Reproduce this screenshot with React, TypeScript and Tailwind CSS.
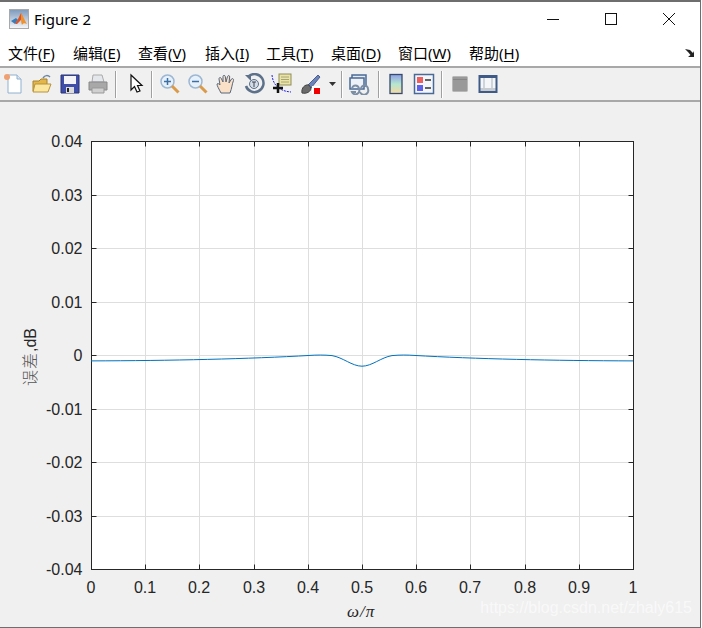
const menus = [
  ['文件', 'F', 'w-[65px]'],
  ['编辑', 'E', 'w-[65px]'],
  ['查看', 'V', 'w-[67px]'],
  ['插入', 'I', 'w-[61px]'],
  ['工具', 'T', 'w-[65px]'],
  ['桌面', 'D', 'w-[67px]'],
  ['窗口', 'W', 'w-[71px]'],
  ['帮助', 'H', 'w-[60px]'],
];

const xTicks = [0, 0.1, 0.2, 0.3, 0.4, 0.5, 0.6, 0.7, 0.8, 0.9, 1];
const yTicks = ['0.04', '0.03', '0.02', '0.01', '0', '-0.01', '-0.02', '-0.03', '-0.04'];

// plot box inside the chart svg (which starts at y=102)
const L = 91.5;
const R = 633.5;
const T = 39.5;
const B = 467.5;

function Icon({ children, className = 'w-[28px]' }: { children: React.ReactNode; className?: string }) {
  return (
    <div className={`flex h-[24px] shrink-0 items-center justify-center ${className}`}>
      <svg width="22" height="22" viewBox="0 0 22 22">
        {children}
      </svg>
    </div>
  );
}

function Sep({ className }: { className: string }) {
  return <div className={`h-[27px] w-[2px] shrink-0 border-l border-[#a0a0a0] bg-white ${className}`} />;
}

function MatlabLogo() {
  return (
    <div className="mr-[5px] flex h-[20px] w-[20px] items-center justify-center border border-[#a9a9a9] bg-gradient-to-b from-[#7f9cbd] to-[#f4f6f8]">
      <svg width="16" height="14" viewBox="0 0 16 14">
        <path d="M0 9 L5 6 L7 8 L4 12 Z" fill="#3a7cb8" />
        <path d="M4 12 L7 7 L10 1 L12 5 L9 9 L6 12 Z" fill="#d9552b" />
        <path d="M10 1 C12 4 14 9 16 12 C14 11 12 11 11 13 C10 10 10 7 10 1 Z" fill="#f0912c" />
      </svg>
    </div>
  );
}

export default function App() {
  return (
    <div className="relative h-[628px] w-[702px] overflow-hidden bg-white [font-family:'Noto_Sans','Noto_Sans_CJK_SC',sans-serif]">
      <div className="flex h-[628px] w-[701px] flex-col border-t-2 border-r border-b border-[#6e6e6e]">
        {/* Title bar */}
        <header className="flex h-[38px] items-start pt-[7px] pl-[9px] pr-[24px]">
          <MatlabLogo />
          <span className="text-[15px] leading-[20px] text-black">Figure 2</span>
          <div className="ml-auto flex h-[20px] items-center">
            <svg width="14" height="14" viewBox="0 0 14 14" className="mr-[44px]">
              <path d="M1 7.5H13" stroke="#111" />
            </svg>
            <svg width="14" height="14" viewBox="0 0 14 14" className="mr-[44px]">
              <rect x="1.5" y="1.5" width="11" height="11" fill="none" stroke="#111" />
            </svg>
            <svg width="14" height="14" viewBox="0 0 14 14">
              <path d="M1 1L13 13M13 1L1 13" stroke="#111" />
            </svg>
          </div>
        </header>

        {/* Menu */}
        <nav className="flex h-[28px] items-center border-b-2 border-[#a8a8a8] pl-[8px] pr-[4px] text-[15px] leading-none text-black">
          {menus.map(([name, key, w]) => (
            <span key={name} className={`${w} whitespace-nowrap`}>
              {name}(<span className="underline underline-offset-2">{key}</span>)
            </span>
          ))}
          <svg width="12" height="10" viewBox="0 0 12 10" className="ml-auto">
            <path d="M1 1L6 2L9 5L10 3V9H4L6.5 7L4 4Z" fill="#222" />
          </svg>
        </nav>

        {/* Toolbar */}
        <div className="flex h-[34px] items-center border-b-2 border-[#a8a8a8] bg-[#f0f0f0]">
          <Icon>
            <path d="M5 2H14L18 6V20H5Z" fill="#fff" stroke="#8fb0d0" />
            <path d="M14 2V6H18" fill="#dbe7f3" stroke="#8fb0d0" />
            <circle cx="4" cy="4" r="3" fill="#f0a070" />
          </Icon>
          <Icon>
            <path d="M2 8H8L10 6H16V18H2Z" fill="#e3b64a" stroke="#a8822c" />
            <path d="M4 11H20L17 19H2Z" fill="#fbe7a0" stroke="#b8923a" />
            <path d="M12 5C14 2 17 2 19 4" fill="none" stroke="#6d86a3" strokeWidth="1.5" />
          </Icon>
          <Icon>
            <path d="M2 2H20V20H2Z" fill="#3f4ea8" stroke="#2a3576" />
            <rect x="5" y="3" width="12" height="8" fill="#f4f4f8" />
            <rect x="7" y="14" width="8" height="6" fill="#dcdcdc" />
            <rect x="8" y="15" width="2" height="4" fill="#222" />
          </Icon>
          <Icon>
            <path d="M6 2H15L17 9H5Z" fill="#e4e8ec" stroke="#aaa" />
            <path d="M2 9H20V17H2Z" fill="#a8a8a8" stroke="#888" />
            <path d="M5 15H17V20H5Z" fill="#d0d0d0" stroke="#999" />
          </Icon>
          <Sep className="ml-[3px]" />
          <Icon className="ml-[5px] w-[28px]">
            <path d="M6 2V17L9.5 13.5L12 19L15 18L12.5 12.5H17Z" fill="#fff" stroke="#111" strokeWidth="1.2" />
          </Icon>
          <Sep className="ml-[1px]" />
          <Icon className="ml-[3px] w-[28px]">
            <circle cx="8.5" cy="8.5" r="6.5" fill="#e6f0fa" stroke="#9db7d3" strokeWidth="1.5" />
            <path d="M5 8.5H12M8.5 5V12" stroke="#3c6fa6" strokeWidth="1.5" />
            <path d="M13 13L19.5 19.5" stroke="#d99a4a" strokeWidth="3" />
          </Icon>
          <Icon>
            <circle cx="8.5" cy="8.5" r="6.5" fill="#e6f0fa" stroke="#9db7d3" strokeWidth="1.5" />
            <path d="M5 8.5H12" stroke="#3c6fa6" strokeWidth="1.5" />
            <path d="M13 13L19.5 19.5" stroke="#d99a4a" strokeWidth="3" />
          </Icon>
          <Icon>
            <path
              d="M6 20C4 16 2 13 2 11C3 10 4 11 5 12L4 6C4 4 6 4 6.5 6L8 9L8 3.5C8 2 10 2 10.3 3.5L11 9L12.5 3.5C13 2 15 2.5 14.7 4L14 10L16.5 6C17.5 5 19 6 18.5 7.5C17 11 17 15 15 20Z"
              fill="#fbe0c8"
              stroke="#57677a"
            />
          </Icon>
          <Icon>
            <path d="M6 3A9 9 0 1 1 3 13" fill="none" stroke="#5c7089" strokeWidth="2.5" />
            <path d="M2 2H8V8Z" fill="#5c7089" />
            <circle cx="11" cy="11" r="4.5" fill="#d3dde8" stroke="#5c7089" />
            <path d="M9 9H13M11 9V14" stroke="#445" />
          </Icon>
          <Icon>
            <path d="M1 2C2 12 8 18 20 19" fill="none" stroke="#2222dd" strokeDasharray="2 1" />
            <rect x="8" y="1" width="12" height="11" fill="#e9e3a5" stroke="#8f8c5a" />
            <path d="M10 4H18M10 6.5H18M10 9H18" stroke="#a8a47a" />
            <path d="M7 10V20M2 15H12" stroke="#111" strokeWidth="2.5" />
          </Icon>
          <Icon className="ml-[1px] w-[28px]">
            <path d="M8 12L18 2L20 4L11 15Z" fill="#6b83b8" stroke="#4a5f8f" />
            <path d="M2 20C1 15 5 11 9 12L11 15C11 19 6 21 2 20Z" fill="#6b6b6b" stroke="#444" />
            <rect x="12" y="13" width="8" height="8" fill="#fff" />
            <rect x="14" y="15" width="6" height="6" fill="#f00000" />
          </Icon>
          <svg width="7" height="4" viewBox="0 0 7 4" className="ml-[4px] shrink-0">
            <path d="M0 0H7L3.5 4Z" fill="#333" />
          </svg>
          <Sep className="ml-[5px]" />
          <Icon className="ml-[3px] w-[28px]">
            <rect x="3" y="2" width="14" height="11" fill="#e3ebf5" stroke="#4a6a96" strokeWidth="1.5" />
            <rect x="1" y="5" width="14" height="11" fill="#eef2f8" stroke="#4a6a96" strokeWidth="1.5" />
            <path d="M3 16A3 3 0 0 1 10 16A3 3 0 0 1 3 19H7M11 19A3 3 0 0 0 19 16A3 3 0 0 0 12 16" fill="none" stroke="#7c8ea5" strokeWidth="2" />
          </Icon>
          <Sep className="ml-[4px]" />
          <Icon className="ml-[2px] w-[28px]">
            <defs>
              <linearGradient id="cb" x1="0" y1="0" x2="0" y2="1">
                <stop offset="0" stopColor="#8f9fe8" />
                <stop offset="0.5" stopColor="#b4e6d0" />
                <stop offset="1" stopColor="#f8d8a0" />
              </linearGradient>
            </defs>
            <rect x="5" y="1.5" width="12" height="19" fill="url(#cb)" stroke="#34496e" strokeWidth="1.3" />
          </Icon>
          <Icon>
            <rect x="1.5" y="1.5" width="19" height="19" fill="#f4f6fa" stroke="#4a6a96" strokeWidth="1.5" />
            <rect x="4" y="4" width="6" height="6" fill="#ee5f5f" />
            <rect x="4" y="12" width="6" height="6" fill="#5f62e8" />
            <path d="M12 7H18M12 15H18" stroke="#333" strokeWidth="1.5" />
          </Icon>
          <Sep className="ml-[3px]" />
          <Icon className="ml-[3px] w-[28px]">
            <rect x="3.5" y="3.5" width="15" height="15" rx="1" fill="#999" stroke="#b8b8b8" />
            <path d="M4 6.5H18" stroke="#858585" />
          </Icon>
          <Icon>
            <rect x="1.5" y="2" width="19" height="18" fill="#3f5a86" />
            <rect x="3.5" y="5" width="15" height="10" fill="#f4f6f8" />
            <rect x="3.5" y="15" width="15" height="3" fill="#c8ccd0" />
            <path d="M7 5V15M15 5V15" stroke="#a9b3c2" />
          </Icon>
        </div>

        {/* Plot area */}
        <main className="relative flex-1 bg-[#f0f0f0]">
          <svg width="700" height="525" viewBox="0 0 700 525" className="block font-['Liberation_Sans',sans-serif]">
            <rect x={L} y={T} width={R - L} height={B - T} fill="#fff" />
            {xTicks.map((t) => {
              const x = Math.floor(L + (R - L) * t) + 0.5;
              return (
                <g key={t}>
                  <path d={`M${x} ${T}V${B}`} stroke="#dedede" />
                  <path d={`M${x} ${B}v-5M${x} ${T}v5`} stroke="#262626" />
                  <text x={x - 0.5} y={B + 23} textAnchor="middle" fontSize="16" fill="#262626">
                    {t}
                  </text>
                </g>
              );
            })}
            {yTicks.map((t, i) => {
              const y = Math.floor(T + ((B - T) * i) / 8) + 0.5;
              return (
                <g key={t}>
                  <path d={`M${L} ${y}H${R}`} stroke="#dedede" />
                  <path d={`M${L} ${y}h5M${R} ${y}h-5`} stroke="#262626" />
                  <text x={L - 9} y={y + 5} textAnchor="end" fontSize="16" fill="#262626">
                    {t}
                  </text>
                </g>
              );
            })}
            <rect x={L} y={T} width={R - L} height={B - T} fill="none" stroke="#262626" />
            <path
              transform="translate(0 -101.6)"
              d="M91 360.5C170 360.3 250 358.5 310 355C316 354.6 324 354.4 332 355.2C343 357 352 365.8 362 365.8C372 365.8 381 357 392 355.2C400 354.4 408 354.6 414 355C474 358.5 554 360.3 633 360.5"
              fill="none"
              stroke="#0072bd"
              strokeWidth="1"
            />
            <text transform="translate(36 284) rotate(-90)" fontSize="16" fill="#555" fontFamily="'Noto Sans CJK SC',sans-serif" fontWeight="300" letterSpacing="1">
              误差<tspan fontFamily="'Liberation Sans'" fill="#262626" letterSpacing="0">,dB</tspan>
            </text>
            <text x="347" y="515" fontSize="17" fontStyle="italic" fill="#262626" letterSpacing="1" fontFamily="'Liberation Serif',serif">
              ω/π
            </text>
          </svg>
          <span className="absolute right-[8px] bottom-[11px] font-['Liberation_Sans',sans-serif] text-[16px] leading-none text-[#ffffff99]">
            https://blog.csdn.net/zhaly615
          </span>
        </main>
      </div>
    </div>
  );
}
